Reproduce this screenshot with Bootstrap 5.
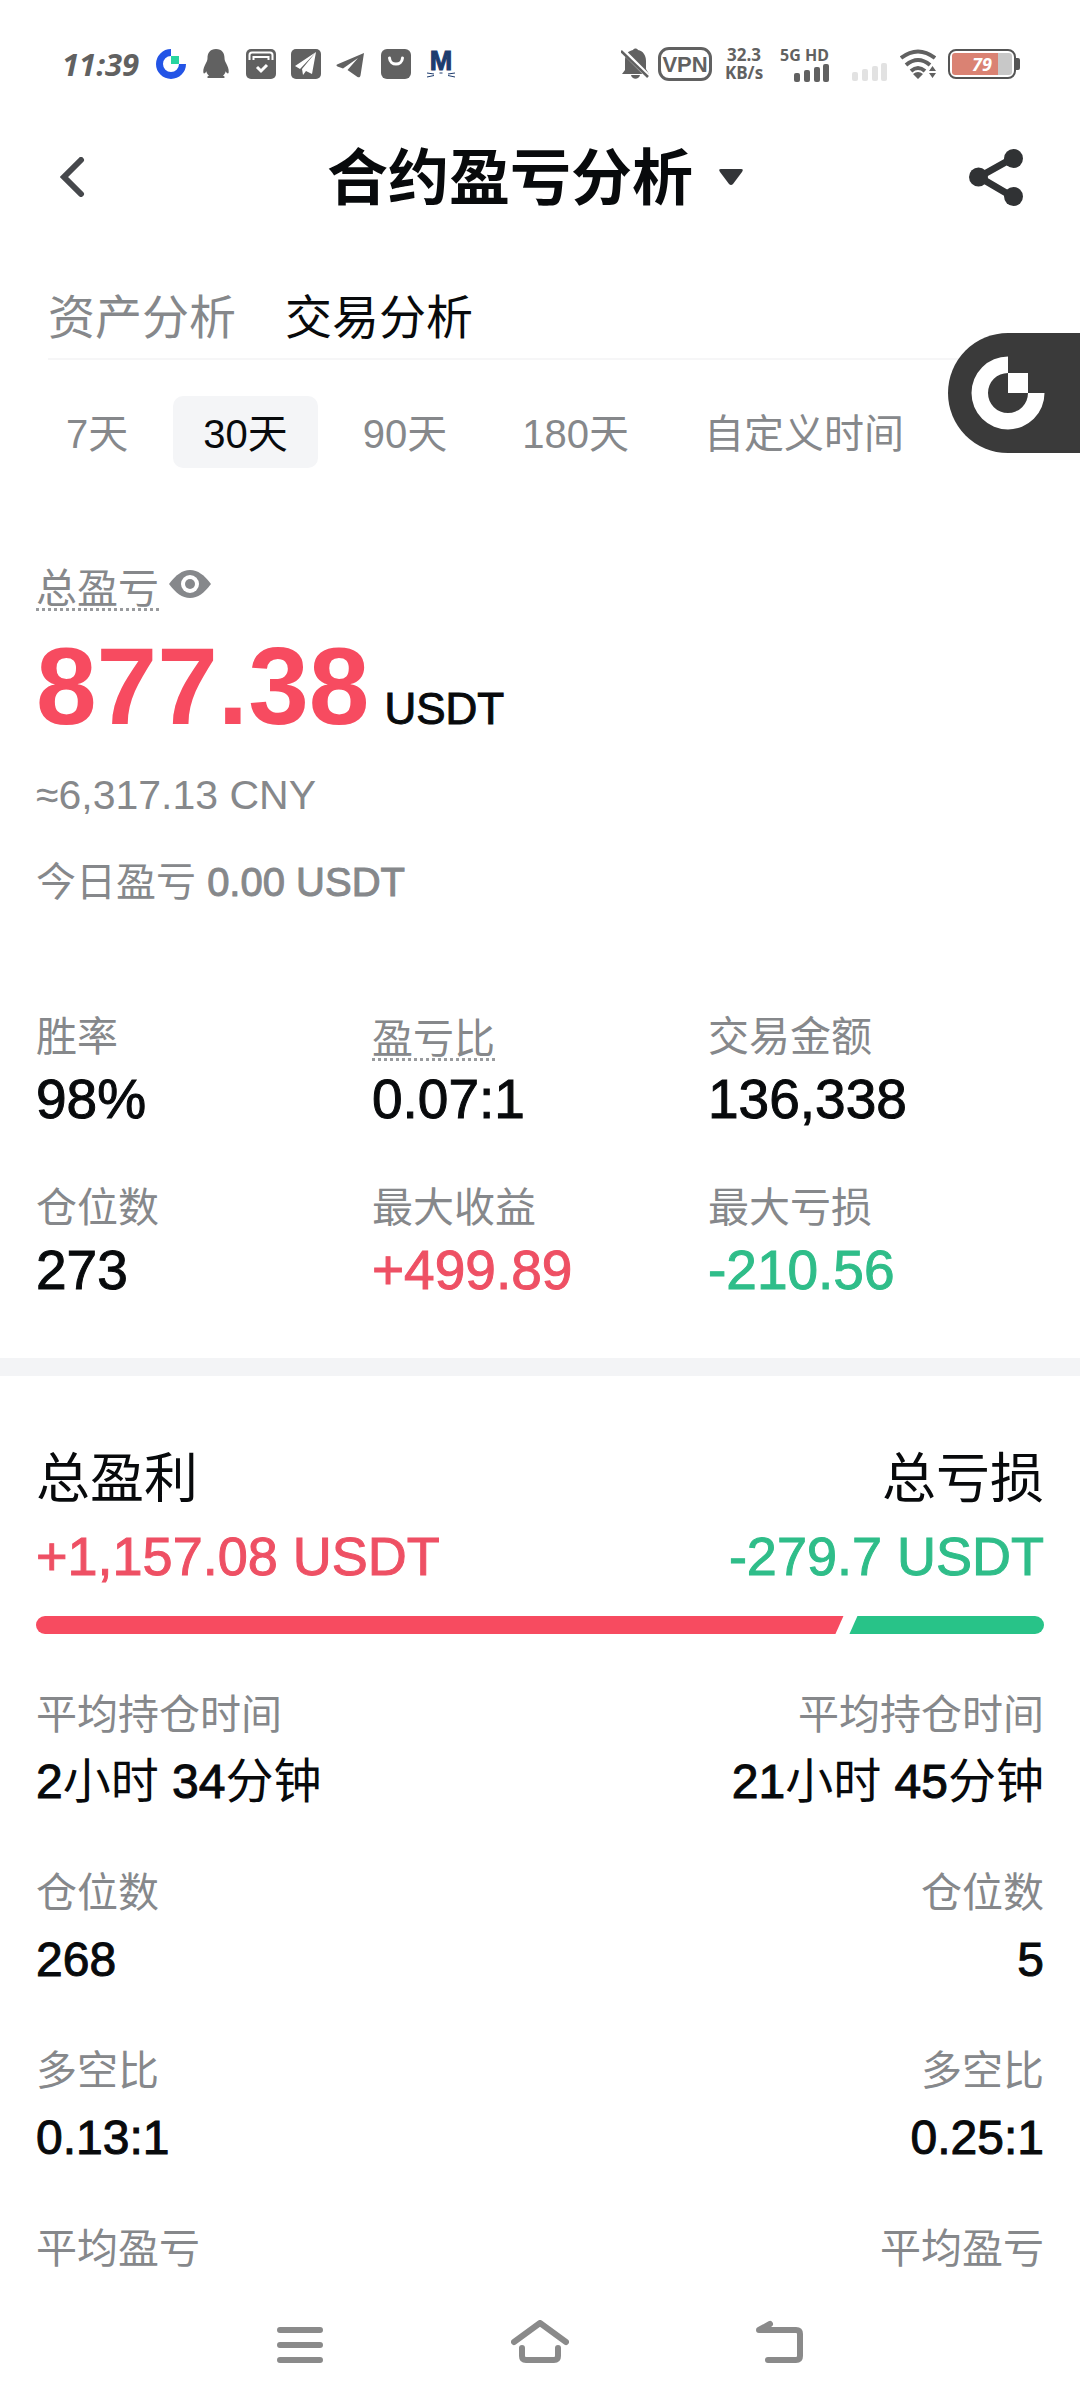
<!DOCTYPE html>
<html lang="zh-CN">
<head>
<meta charset="utf-8">
<meta name="viewport" content="width=device-width, initial-scale=1">
<title>合约盈亏分析</title>
<link href="https://cdn.jsdelivr.net/npm/bootstrap@5.3.0/dist/css/bootstrap.min.css" rel="stylesheet">
<style>
:root{--ink:#080a0c;--mute:#86888b;--up:#f74b60;--down:#28c388;--icon:#616161}
body{font-family:"Liberation Sans","Noto Sans CJK SC",sans-serif;color:var(--ink);background:#fff}
svg{display:block;flex:none}
button{font-family:inherit}
.status-bar{height:128px;padding:0 60px;color:var(--icon)}
.clock{font:italic 700 31px/36px "Open Sans","Noto Sans",sans-serif;width:82px;padding-left:2px}
.app-icons{gap:15px;margin-left:14px}
.sys-icons{gap:12px}
.bell{margin-right:-3px}
.vpn{border:3px solid var(--icon);border-radius:11px;width:54px;height:34px;font:700 22px/29px "Liberation Sans",sans-serif;text-align:center}
.net{font:700 17px/18px "Open Sans","Noto Sans",sans-serif;width:40px}
.gen{font:700 16px/17px "Noto Sans",sans-serif;width:52px}
.battery{width:68px;height:30px;border:2px solid #555;border-radius:8px;padding:2px;color:#fff}
.battery-fill{background:linear-gradient(90deg,#da8273 77%,#c8c8c8 77%);border-radius:3px;height:22px;font:italic 700 18px/22px "Open Sans",sans-serif;text-align:center}
.battery-tip{width:4px;height:12px;background:#555;border-radius:0 2px 2px 0}
.app-head{height:98px;padding:0 57px 0 60px}
.side{flex:1}
.share{padding-bottom:6px}
.plain{background:none;border:0;padding:0;color:inherit}
.page-title{font-size:61px;line-height:72px;font-weight:700;padding-top:4px}
.title-btn{gap:26px;padding-right:13px}
.tabs{margin:60px 0 0 48px;padding-bottom:8px;border-bottom:2px solid #f6f6f7;gap:49px}
.tabs a{font-size:47px;line-height:64px;color:var(--mute);text-decoration:none}
.tabs a.active{color:var(--ink)}
.ranges{padding:36px 36px 0;gap:15px}
.range{height:72px;padding:2px 30px 0;border-radius:10px;font-size:40px;line-height:72px;color:var(--mute);white-space:nowrap}
.range.active{background:#f4f5f7;color:var(--ink)}
.float-tab{position:absolute;top:333px;right:0;width:132px;height:120px;border-radius:60px 0 0 60px;background:#3a3a3a;padding-left:23px}
.block{padding:0 36px}
.label{font-size:41px;line-height:48px;font-weight:400;color:var(--mute);margin:0}
.hint{display:inline-block;line-height:38px;border-bottom:3px dotted #999b9e}
.total{margin-top:102px;gap:10px}
.total-value{margin-top:21px;font-size:109px;line-height:108px;font-weight:700;color:var(--up)}
.unit{font-size:44px;line-height:48px;font-weight:400;color:var(--ink);margin-left:15px;-webkit-text-stroke:1px}
.approx{margin-top:31px;font-size:41px;line-height:48px;color:var(--mute)}
.today{margin-top:39px;font-size:40px;line-height:48px;color:var(--mute)}
.today span{-webkit-text-stroke:1px}
.stats{margin-top:106px;padding-bottom:56px;row-gap:52px}
.stat-label{height:49px}
.stat-value{margin:6px 0 0;font-size:55px;line-height:64px;-webkit-text-stroke:1px}
.strip{height:18px;background:#f3f4f6}
.compare{padding-top:71px}
.side-title{font-size:54px;line-height:64px;font-weight:400;margin:0}
.side-value{font-size:54px;line-height:64px;margin-top:13px;-webkit-text-stroke:1px}
.up{color:#ee5064}.down{color:#2fbd89}
.split-bar{height:18px;margin:28px 0 57px}
.split-up{background:var(--up);border-radius:9px 0 0 9px;clip-path:polygon(0 0,calc(100% - 4px) 0,calc(100% - 12px) 100%,0 100%)}
.split-down{flex:1;background:var(--down);border-radius:0 9px 9px 0;clip-path:polygon(10px 0,100% 0,100% 100%,2px 100%)}
.pairs{gap:59px}
.pair-value{margin:15px 0 0;font-size:48px;line-height:56px}
.pair-value b{font-weight:400;-webkit-text-stroke:1px}
.sys-nav{height:126px;padding:0 16.666%}
</style>
</head>
<body>
<div class="min-vh-100 d-flex flex-column position-relative">
<header>
  <div class="status-bar d-flex align-items-center justify-content-between">
    <div class="d-flex align-items-center">
      <span class="clock">11:39</span>
      <div class="app-icons d-flex align-items-center">
        <svg width="30" height="30" viewBox="0 0 30 30"><path d="M15 0A15 15 0 1 0 30 15H23A8 8 0 1 1 15 7Z" fill="#2354e6"/><path d="M15 7h8v8h-8z" fill="#28d5a0"/></svg>
        <svg width="30" height="30" viewBox="0 0 30 30" fill="#616161"><path d="M15 0C9 0 6.500 4 6.500 9c0 2-.5 3-1.500 5-1.500 3-3 6-2.700 9 .3 2.500 1.700 1.500 3-.8.5 2 1.300 3.300 2.700 4.500-2 .6-2.500 2.300 0 2.300h14c2.500 0 2-1.700 0-2.300 1.400-1.200 2.200-2.500 2.700-4.500 1.300 2.300 2.700 3.300 3 .8.3-3-1.200-6-2.700-9-1-2-1.500-3-1.500-5 0-5-2.500-9-8.500-9z"/></svg>
        <svg width="30" height="30" viewBox="0 0 30 30"><rect width="30" height="30" rx="5" fill="#616161"/><path d="M3.500 11V6q0-2.500 2.500-2.500h18q2.500 0 2.500 2.500v5M7.500 11V8h15v3" fill="none" stroke="#fff" stroke-width="2"/><path d="m11 18 4 4 6-6" fill="none" stroke="#fff" stroke-width="3"/></svg>
        <svg width="30" height="30" viewBox="0 0 30 30"><rect width="30" height="30" rx="5" fill="#616161"/><path d="M25 3 4 17l5 3zM25 3 11 20l1 6 3-4 6 3z" fill="#fff"/></svg>
        <svg width="30" height="30" viewBox="0 0 30 30"><path d="M28 4 1 15.500c-1 .5-.5 1.500.5 2l5.500 2L22 9 11.500 21l10 7c1.500.8 2.500.3 3-1.500z" fill="#616161"/></svg>
        <svg width="30" height="30" viewBox="0 0 30 30"><rect width="30" height="30" rx="6" fill="#616161"/><path d="M8.500 9c.5 8 12.500 8 13 0" fill="none" stroke="#fff" stroke-width="3" stroke-linecap="round"/></svg>
        <svg width="30" height="46" viewBox="0 -8 30 46"><text x="15" y="21" text-anchor="middle" font-family="Liberation Sans" font-weight="700" font-size="27" fill="#1e3c6e" stroke="#1e3c6e">M</text><path d="M1 24l7 1M1 28l7-1.500M29 24l-7 1M29 28l-7-1.500M13.500 24h3" stroke="#1e3c6e"/></svg>
      </div>
    </div>
    <div class="sys-icons d-flex align-items-center">
      <svg class="bell" width="28" height="32" viewBox="0 0 28 32"><path d="M4 13C4 6 7 3 12 2c1-2 4-2 5 0 5 1 8 5 8 11v8l3 5H1l3-4zM10 27h9c-1 5-8 5-9 0z" fill="#616161"/><path d="M1 2 28 29" stroke="#fff" stroke-width="5"/><path d="M0 3 27 29" stroke="#616161" stroke-width="2.500"/></svg>
      <span class="vpn">VPN</span>
      <span class="net me-1 text-center">32.3 KB/s</span>
      <div class="gen text-nowrap">5G HD
        <svg class="ms-auto" width="38" height="18" viewBox="0 0 38 18" fill="#616161"><rect y="9" width="6" height="9" rx="2"/><rect x="10" y="6" width="6" height="12" rx="2"/><rect x="20" y="3" width="6" height="15" rx="2"/><rect x="29" width="6" height="18" rx="2"/></svg>
      </div>
      <svg class="ms-2 mt-3" width="36" height="18" viewBox="0 0 36 18" fill="#e2e2e2"><rect y="9" width="6" height="9" rx="2"/><rect x="10" y="6" width="6" height="12" rx="2"/><rect x="20" y="3" width="6" height="15" rx="2"/><rect x="29" width="6" height="18" rx="2"/></svg>
      <svg width="36" height="30" viewBox="0 0 36 30"><g fill="none" stroke="#616161" stroke-width="4"><path d="M1 9Q18-4 35 9M6 16q12-10 24 0M11 22q7-6 14 0"/></g><path d="M13 25q5-4 10 0l-5 5zM29 22l3.500-5 3.500 5zM29 24h7l-3.500 5z" fill="#616161"/></svg>
      <div class="d-flex align-items-center"><div class="battery"><div class="battery-fill">79</div></div><div class="battery-tip"></div></div>
    </div>
  </div>
  <div class="app-head d-flex align-items-center">
    <div class="side d-flex"><button class="plain" aria-label="返回"><svg width="26" height="40" viewBox="0 0 26 40"><path d="M21 3 4 20l17 17" fill="none" stroke="#46484c" stroke-width="6" stroke-linecap="round"/></svg></button></div>
    <button class="plain title-btn d-flex align-items-center"><span class="page-title">合约盈亏分析</span><svg width="24" height="16" viewBox="0 0 24 16"><path d="M2 0h20q3 0 1 3L14 15q-2 2-4 0L1 3q-2-3 1-3z" fill="#333538"/></svg></button>
    <div class="side d-flex justify-content-end"><button class="plain share" aria-label="分享"><svg width="54" height="57" viewBox="0 0 54 57" fill="#303234"><path d="M44 9 10 28l34 20" fill="none" stroke="#303234" stroke-width="7"/><circle cx="44.500" cy="9.500" r="9.500"/><circle cx="9.500" cy="28" r="9.500"/><circle cx="44.500" cy="47.500" r="9.500"/></svg></button></div>
  </div>
</header>
<main>
  <nav class="tabs d-flex"><a href="#">资产分析</a><a href="#" class="active" aria-current="page">交易分析</a></nav>
  <div class="ranges d-flex">
    <button class="plain range">7天</button><button class="plain range active">30天</button><button class="plain range">90天</button><button class="plain range">180天</button><button class="plain range">自定义时间</button>
  </div>
  <section class="block">
    <div class="total d-flex align-items-start">
      <h2 class="label hint">总盈亏</h2>
      <button class="plain" aria-label="显示或隐藏金额"><svg width="42" height="28" viewBox="0 0 42 28"><path d="M0 14C7 5 13 0 21 0s14 5 21 14c-7 9-13 14-21 14S7 23 0 14z" fill="#86888b"/><circle cx="21" cy="14" r="9" fill="#fff"/><circle cx="21" cy="14" r="5" fill="#86888b"/></svg></button>
    </div>
    <div class="total-value">877.38<span class="unit">USDT</span></div>
    <div class="approx">≈6,317.13 CNY</div>
    <div class="today">今日盈亏 <span>0.00 USDT</span></div>
    <dl class="stats row g-0 mb-0">
      <div class="col-4"><dt class="label stat-label d-flex align-items-end">胜率</dt><dd class="stat-value">98%</dd></div>
      <div class="col-4"><dt class="label stat-label d-flex align-items-end"><span class="hint">盈亏比</span></dt><dd class="stat-value">0.07:1</dd></div>
      <div class="col-4"><dt class="label stat-label d-flex align-items-end">交易金额</dt><dd class="stat-value">136,338</dd></div>
      <div class="col-4"><dt class="label stat-label d-flex align-items-end">仓位数</dt><dd class="stat-value">273</dd></div>
      <div class="col-4"><dt class="label stat-label d-flex align-items-end">最大收益</dt><dd class="stat-value up">+499.89</dd></div>
      <div class="col-4"><dt class="label stat-label d-flex align-items-end">最大亏损</dt><dd class="stat-value down">-210.56</dd></div>
    </dl>
  </section>
  <div class="strip"></div>
  <section class="block compare">
    <div class="d-flex justify-content-between">
      <div><h2 class="side-title">总盈利</h2><div class="side-value up">+1,157.08 USDT</div></div>
      <div class="text-end"><h2 class="side-title">总亏损</h2><div class="side-value down">-279.7 USDT</div></div>
    </div>
    <div class="split-bar d-flex"><div class="split-up" style="width:80.5%"></div><div class="split-down"></div></div>
    <div class="d-flex justify-content-between">
      <dl class="pairs d-flex flex-column mb-0">
        <div><dt class="label">平均持仓时间</dt><dd class="pair-value"><b>2</b>小时 <b>34</b>分钟</dd></div>
        <div><dt class="label">仓位数</dt><dd class="pair-value"><b>268</b></dd></div>
        <div><dt class="label">多空比</dt><dd class="pair-value"><b>0.13:1</b></dd></div>
        <div><dt class="label">平均盈亏</dt></div>
      </dl>
      <dl class="pairs d-flex flex-column mb-0 text-end">
        <div><dt class="label">平均持仓时间</dt><dd class="pair-value"><b>21</b>小时 <b>45</b>分钟</dd></div>
        <div><dt class="label">仓位数</dt><dd class="pair-value"><b>5</b></dd></div>
        <div><dt class="label">多空比</dt><dd class="pair-value"><b>0.25:1</b></dd></div>
        <div><dt class="label">平均盈亏</dt></div>
      </dl>
    </div>
  </section>
</main>
<button class="plain float-tab" aria-label="悬浮窗"><svg width="76" height="76" viewBox="0 0 76 76" fill="#fff"><path d="M37 1.500A36.500 36.500 0 1 0 73.500 38H57A20 20 0 1 1 37 18Z"/><path d="M37 18h20v20H37z"/></svg></button>
<nav class="sys-nav mt-auto d-flex align-items-center">
  <button class="plain col d-flex justify-content-center" aria-label="最近任务"><svg width="46" height="50" viewBox="0 0 46 50"><path d="M3 10h40M3 25h40M3 40h40" stroke="#8a8a8a" stroke-width="6" stroke-linecap="round"/></svg></button>
  <button class="plain col d-flex justify-content-center" aria-label="主屏幕"><svg width="58" height="50" viewBox="0 0 58 50" fill="none" stroke="#8a8a8a" stroke-width="6" stroke-linecap="round" stroke-linejoin="round"><path d="M3 22 29 3l26 19"/><path d="M11 28v8q0 4 4 4h28q4 0 4-4v-8"/></svg></button>
  <button class="plain col d-flex justify-content-center" aria-label="返回上一页"><svg width="50" height="50" viewBox="0 0 50 50"><path d="M13 40h28q4 0 4-4V14q0-4-4-4H4l11-6" fill="none" stroke="#8a8a8a" stroke-width="6" stroke-linecap="round" stroke-linejoin="round"/></svg></button>
</nav>
</div>
<script src="https://cdn.jsdelivr.net/npm/bootstrap@5.3.0/dist/js/bootstrap.bundle.min.js"></script>
</body>
</html>
